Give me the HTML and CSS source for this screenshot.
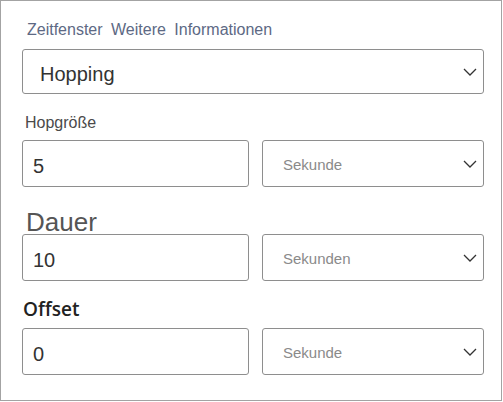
FILE: index.html
```html
<!DOCTYPE html>
<html lang="de">
<head>
<meta charset="utf-8">
<title>Zeitfenster</title>
<link rel="stylesheet" href="styles.css">
</head>
<body>
<div class="panel">
  <div class="title">Zeitfenster Weitere Informationen</div>
  <div class="select-main">
    <span class="main-value">Hopping</span>
    <svg class="chev" width="14" height="8" viewBox="0 0 14 8"><path d="M1 1 L7 7 L13 1" fill="none" stroke="#333" stroke-width="1.3"/></svg>
  </div>

  <div class="label label-hop">Hopgröße</div>
  <div class="row">
    <div class="input"><span class="num">5</span></div>
    <div class="select"><span class="unit">Sekunde</span>
      <svg class="chev" width="14" height="8" viewBox="0 0 14 8"><path d="M1 1 L7 7 L13 1" fill="none" stroke="#333" stroke-width="1.3"/></svg>
    </div>
  </div>

  <div class="label label-dauer">Dauer</div>
  <div class="row">
    <div class="input"><span class="num">10</span></div>
    <div class="select"><span class="unit">Sekunden</span>
      <svg class="chev" width="14" height="8" viewBox="0 0 14 8"><path d="M1 1 L7 7 L13 1" fill="none" stroke="#333" stroke-width="1.3"/></svg>
    </div>
  </div>

  <div class="label label-offset">Offset</div>
  <div class="row">
    <div class="input"><span class="num">0</span></div>
    <div class="select"><span class="unit">Sekunde</span>
      <svg class="chev" width="14" height="8" viewBox="0 0 14 8"><path d="M1 1 L7 7 L13 1" fill="none" stroke="#333" stroke-width="1.3"/></svg>
    </div>
  </div>
</div>
</body>
</html>
```
FILE: styles.css
```css
html, body {
  margin: 0;
  padding: 0;
  background: #ffffff;
}

body {
  font-family: "Liberation Sans", Arial, sans-serif;
}

.panel {
  width: 502px;
  height: 401px;
  box-sizing: border-box;
  border: 1px solid #a3a3a3;
  padding: 19px 17px 0 21px;
}

.title {
  font-size: 16px;
  line-height: 20px;
  color: #5d6984;
  word-spacing: 4px;
  padding-left: 5px;
  margin-bottom: 9px;
}

.select-main {
  height: 45px;
  box-sizing: border-box;
  border: 1px solid #8e8e8e;
  border-radius: 3px;
  display: flex;
  align-items: center;
  padding: 0 6px 0 17px;
}

.main-value {
  flex: 1;
  align-self: flex-start;
  padding-top: 12px;
  font-size: 20px;
  line-height: 24px;
  color: #333333;
}

.chev {
  display: block;
  flex: none;
}

.label {
  color: #4a4a4a;
}

.label-hop {
  font-size: 16px;
  line-height: 20px;
  padding-left: 3px;
  margin-top: 19px;
  margin-bottom: 7px;
}

.label-dauer {
  font-size: 26px;
  line-height: 23px;
  height: 23px;
  padding-left: 4px;
  margin-top: 24px;
  color: #555555;
}

.label-offset {
  font-family: "Open Sans", "Noto Sans", sans-serif;
  font-weight: 600;
  font-size: 19px;
  line-height: 24px;
  padding-left: 1px;
  margin-top: 16px;
  margin-bottom: 7px;
  color: #222222;
}

.row {
  display: grid;
  grid-template-columns: 227px 222px;
  column-gap: 13px;
}

.input,
.select {
  height: 47px;
  box-sizing: border-box;
  border: 1px solid #8e8e8e;
  border-radius: 3px;
}

.input {
  padding: 13px 0 0 10px;
}

.num {
  display: block;
  font-size: 20px;
  line-height: 24px;
  color: #333333;
}

.select {
  display: flex;
  align-items: center;
  padding: 0 6px 0 20px;
}

.unit {
  flex: 1;
  align-self: flex-start;
  padding-top: 15px;
  font-size: 15px;
  line-height: 18px;
  color: #8a8a8a;
}
```
